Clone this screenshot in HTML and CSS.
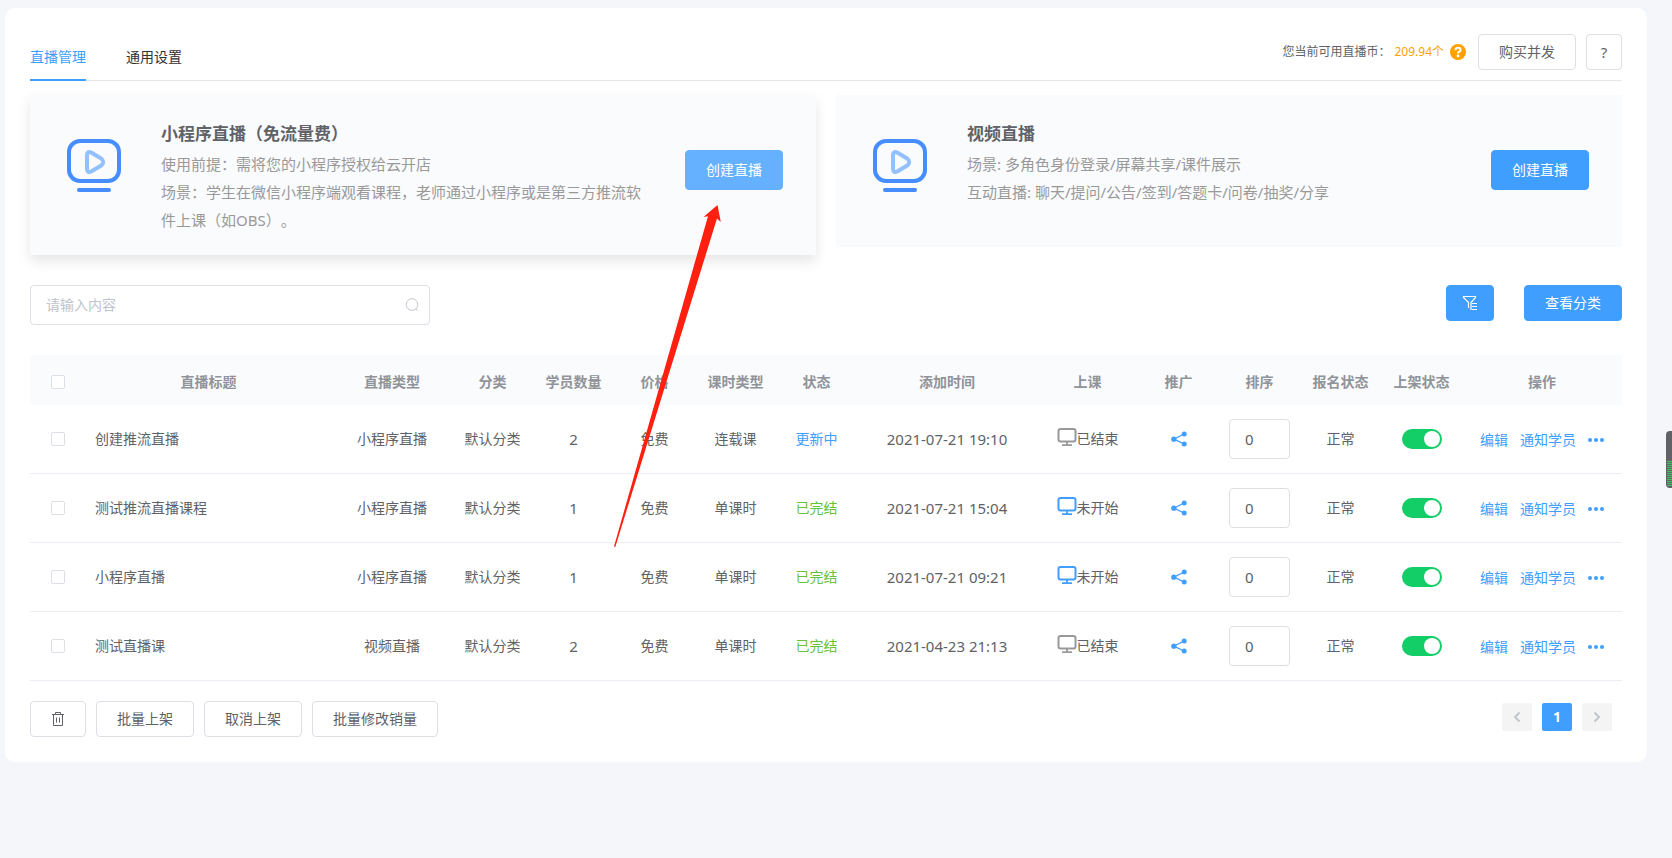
FILE: index.html
```html
<!DOCTYPE html>
<html lang="zh-CN">

<head>
    <meta charset="utf-8">
    <title>直播管理</title>
    <link rel="stylesheet" href="styles.css">
</head>

<body>

    <svg class="sprite" aria-hidden="true">
        <symbol id="icon-live" viewBox="0 0 54 54">
            <rect x="2" y="2" width="50" height="40" rx="11" fill="none" stroke="#468dff" stroke-width="4" />
            <path d="M20 16v13.500q0 5 4.600 2.800l9.600-5.800q4-3.500 0-7l-9.600-5.800q-4.600-2.200-4.600 2.300z" fill="none" stroke="#93c0ff" stroke-width="4" stroke-linejoin="round" />
            <path d="M12 51h30" stroke="#468dff" stroke-width="4" stroke-linecap="round" />
        </symbol>
        <symbol id="icon-monitor" viewBox="0 0 20 20">
            <rect x="1.500" y="2" width="17" height="12.500" rx="2" fill="none" stroke="currentColor" stroke-width="2" />
            <path d="M10 14v4M5 18.200h10" fill="none" stroke="currentColor" stroke-width="1.800" />
        </symbol>
        <symbol id="icon-share" viewBox="0 0 16 16">
            <path d="M13 3L3 8.200l10 4.800" fill="none" stroke="currentColor" stroke-width="1.300" />
            <circle cx="13.200" cy="3" r="2.500" fill="currentColor" />
            <circle cx="2.800" cy="8.200" r="2.600" fill="currentColor" />
            <circle cx="13.200" cy="13" r="2.500" fill="currentColor" />
        </symbol>
        <symbol id="icon-more" viewBox="0 0 16 16">
            <circle cx="2" cy="8" r="2" fill="currentColor" />
            <circle cx="8" cy="8" r="2" fill="currentColor" />
            <circle cx="14" cy="8" r="2" fill="currentColor" />
        </symbol>
    </svg>

    <main class="panel">

        <header class="panel-header">
            <nav class="tabs">
                <a href="#" class="tab active">直播管理</a>
                <a href="#" class="tab">通用设置</a>
            </nav>
            <div class="account">
                <span class="account-label">您当前可用直播币：</span>
                <span class="account-value">209.94个</span>
                <svg class="account-help" width="16" height="16" viewBox="0 0 16 16">
                    <circle cx="8" cy="8" r="8" fill="#ffa200" />
                    <path d="M5.500 6.200q0-2.500 2.500-2.500t2.500 2.200q0 1.200-1.400 1.900-1.100.6-1.100 1.700" fill="none" stroke="#fff" stroke-width="2.100" />
                    <circle cx="8" cy="12" r="1.400" fill="#fff" />
                </svg>
                <button type="button" class="btn">购买并发</button>
                <button type="button" class="btn btn-square">?</button>
            </div>
        </header>

        <section class="cards">
            <div class="card card-hover">
                <svg class="card-icon" width="54" height="54"><use href="#icon-live" /></svg>
                <div class="card-body">
                    <h2>小程序直播（免流量费）</h2>
                    <p>使用前提：需将您的小程序授权给云开店</p>
                    <p>场景：学生在微信小程序端观看课程，老师通过小程序或是第三方推流软件上课（如OBS）。</p>
                </div>
                <button type="button" class="btn btn-primary btn-large btn-light">创建直播</button>
            </div>
            <div class="card">
                <svg class="card-icon" width="54" height="54"><use href="#icon-live" /></svg>
                <div class="card-body">
                    <h2>视频直播</h2>
                    <p>场景: 多角色身份登录/屏幕共享/课件展示</p>
                    <p>互动直播: 聊天/提问/公告/签到/答题卡/问卷/抽奖/分享</p>
                </div>
                <button type="button" class="btn btn-primary btn-large">创建直播</button>
            </div>
        </section>

        <div class="toolbar">
            <div class="search">
                <input type="text" placeholder="请输入内容" aria-label="请输入内容">
                <svg width="14" height="14" viewBox="0 0 14 14" fill="none" stroke="#c0c4cc">
                    <circle cx="7" cy="6.500" r="5.800" />
                    <path d="M10.600 10.500l2 2.200" />
                </svg>
            </div>
            <div class="toolbar-buttons">
                <button type="button" class="btn btn-primary btn-icon" aria-label="筛选">
                    <svg width="16" height="16" viewBox="0 0 16 16" fill="none" stroke="#fff" stroke-width="1.200">
                        <path d="M6.500 13V7.500L1.500 2.500v-1h12v1L9 7.500v7.500M10 8.500h5M10 11.500h5M10 14.500h5" />
                    </svg>
                </button>
                <button type="button" class="btn btn-primary">查看分类</button>
            </div>
        </div>

        <table class="live-table">
            <colgroup>
                <col class="col-check">
                <col>
                <col class="col-type">
                <col class="col-small">
                <col class="col-small">
                <col class="col-small">
                <col class="col-small">
                <col class="col-small">
                <col class="col-time">
                <col class="col-class">
                <col class="col-small">
                <col class="col-small">
                <col class="col-small">
                <col class="col-small">
                <col class="col-actions">
            </colgroup>
            <thead>
                <tr>
                    <th><input type="checkbox" class="checkbox" aria-label="全选"></th>
                    <th>直播标题</th>
                    <th>直播类型</th>
                    <th>分类</th>
                    <th>学员数量</th>
                    <th>价格</th>
                    <th>课时类型</th>
                    <th>状态</th>
                    <th>添加时间</th>
                    <th>上课</th>
                    <th>推广</th>
                    <th>排序</th>
                    <th>报名状态</th>
                    <th>上架状态</th>
                    <th>操作</th>
                </tr>
            </thead>
            <tbody>
                <tr>
                    <td><input type="checkbox" class="checkbox" aria-label="选择"></td>
                    <td class="title">创建推流直播</td>
                    <td>小程序直播</td>
                    <td>默认分类</td>
                    <td class="number">2</td>
                    <td>免费</td>
                    <td>连载课</td>
                    <td class="status-updating">更新中</td>
                    <td class="number">2021-07-21 19:10</td>
                    <td><span class="lesson ended"><svg width="20" height="20"><use href="#icon-monitor" /></svg>已结束</span></td>
                    <td><a href="#" class="share" aria-label="推广"><svg width="16" height="16"><use href="#icon-share" /></svg></a></td>
                    <td><input type="text" class="sort" value="0" aria-label="排序"></td>
                    <td>正常</td>
                    <td><input type="checkbox" class="switch" checked aria-label="上架状态"></td>
                    <td><div class="actions"><a href="#">编辑</a><a href="#">通知学员</a><a href="#" aria-label="更多"><svg width="16" height="16"><use href="#icon-more" /></svg></a></div></td>
                </tr>
                <tr>
                    <td><input type="checkbox" class="checkbox" aria-label="选择"></td>
                    <td class="title">测试推流直播课程</td>
                    <td>小程序直播</td>
                    <td>默认分类</td>
                    <td class="number">1</td>
                    <td>免费</td>
                    <td>单课时</td>
                    <td class="status-done">已完结</td>
                    <td class="number">2021-07-21 15:04</td>
                    <td><span class="lesson"><svg width="20" height="20"><use href="#icon-monitor" /></svg>未开始</span></td>
                    <td><a href="#" class="share" aria-label="推广"><svg width="16" height="16"><use href="#icon-share" /></svg></a></td>
                    <td><input type="text" class="sort" value="0" aria-label="排序"></td>
                    <td>正常</td>
                    <td><input type="checkbox" class="switch" checked aria-label="上架状态"></td>
                    <td><div class="actions"><a href="#">编辑</a><a href="#">通知学员</a><a href="#" aria-label="更多"><svg width="16" height="16"><use href="#icon-more" /></svg></a></div></td>
                </tr>
                <tr>
                    <td><input type="checkbox" class="checkbox" aria-label="选择"></td>
                    <td class="title">小程序直播</td>
                    <td>小程序直播</td>
                    <td>默认分类</td>
                    <td class="number">1</td>
                    <td>免费</td>
                    <td>单课时</td>
                    <td class="status-done">已完结</td>
                    <td class="number">2021-07-21 09:21</td>
                    <td><span class="lesson"><svg width="20" height="20"><use href="#icon-monitor" /></svg>未开始</span></td>
                    <td><a href="#" class="share" aria-label="推广"><svg width="16" height="16"><use href="#icon-share" /></svg></a></td>
                    <td><input type="text" class="sort" value="0" aria-label="排序"></td>
                    <td>正常</td>
                    <td><input type="checkbox" class="switch" checked aria-label="上架状态"></td>
                    <td><div class="actions"><a href="#">编辑</a><a href="#">通知学员</a><a href="#" aria-label="更多"><svg width="16" height="16"><use href="#icon-more" /></svg></a></div></td>
                </tr>
                <tr>
                    <td><input type="checkbox" class="checkbox" aria-label="选择"></td>
                    <td class="title">测试直播课</td>
                    <td>视频直播</td>
                    <td>默认分类</td>
                    <td class="number">2</td>
                    <td>免费</td>
                    <td>单课时</td>
                    <td class="status-done">已完结</td>
                    <td class="number">2021-04-23 21:13</td>
                    <td><span class="lesson ended"><svg width="20" height="20"><use href="#icon-monitor" /></svg>已结束</span></td>
                    <td><a href="#" class="share" aria-label="推广"><svg width="16" height="16"><use href="#icon-share" /></svg></a></td>
                    <td><input type="text" class="sort" value="0" aria-label="排序"></td>
                    <td>正常</td>
                    <td><input type="checkbox" class="switch" checked aria-label="上架状态"></td>
                    <td><div class="actions"><a href="#">编辑</a><a href="#">通知学员</a><a href="#" aria-label="更多"><svg width="16" height="16"><use href="#icon-more" /></svg></a></div></td>
                </tr>
            </tbody>
        </table>

        <footer class="panel-footer">
            <div class="batch">
                <button type="button" class="btn" aria-label="删除">
                    <svg width="14" height="14" viewBox="0 0 14 14" fill="none" stroke="#606266">
                        <path d="M1 2.500h12M4.500 2.500v-2h5v2M2.500 2.500v11h9v-11M5.500 5.500v5M8.500 5.500v5" />
                    </svg>
                </button>
                <button type="button" class="btn">批量上架</button>
                <button type="button" class="btn">取消上架</button>
                <button type="button" class="btn">批量修改销量</button>
            </div>
            <div class="pager">
                <button type="button" class="page" disabled aria-label="上一页">
                    <svg width="12" height="12" viewBox="0 0 12 12"><path d="M8.500 1.500L4 6l4.500 4.500" fill="none" stroke="#c0c4cc" stroke-width="1.800" /></svg>
                </button>
                <button type="button" class="page current">1</button>
                <button type="button" class="page" disabled aria-label="下一页">
                    <svg width="12" height="12" viewBox="0 0 12 12"><path d="M3.500 1.500L8 6l-4.500 4.500" fill="none" stroke="#c0c4cc" stroke-width="1.800" /></svg>
                </button>
            </div>
        </footer>

    </main>

    <!-- arrow pointing at the create button -->
    <svg class="pointer" width="110" height="345" viewBox="0 0 110 345">
        <path d="M105.500 1L108.800 18 105 14.500 3.300 343 2 342.500 96 12.200 91.500 13z" fill="#ff2010" />
    </svg>

    <div class="meter"></div>

</body>

</html>
```
FILE: styles.css
```css
* {
    margin: 0;
    padding: 0;
    box-sizing: border-box;
}

body {
    min-height: 100vh;
    padding: 8px 25px 20px 5px;
    position: relative;
    font-family: "Noto Sans", "Noto Sans CJK SC", sans-serif;
    font-size: 14px;
    line-height: 20px;
    text-spacing-trim: space-all;
    color: #606266;
    background-color: #f4f6fa;
}

a {
    color: #409eff;
    text-decoration: none;
}

button,
input {
    font: inherit;
}

svg {
    display: block;
    flex-shrink: 0;
}

.sprite {
    position: absolute;
    width: 0;
    height: 0;
}

.panel {
    padding: 25px;
    background-color: #fff;
    border-radius: 10px;
}

/* header */

.panel-header {
    display: flex;
    justify-content: space-between;
    margin-bottom: 14px;
    box-shadow: inset 0 -1px #e4e7ed;
}

.tabs {
    display: flex;
    gap: 40px;
}

.tab {
    line-height: 48px;
    color: #303133;
}

.tab.active {
    color: #409eff;
    box-shadow: inset 0 -2px #409eff;
}

.account {
    display: flex;
    align-items: center;
    height: 38px;
    font-size: 12px;
}

.account-value {
    margin: 0 6px 0 4px;
    color: #ffa200;
}

.account-help {
    margin-right: 12px;
}

.account .btn-square {
    width: 36px;
    margin-left: 10px;
    padding: 0;
    font-size: 15px;
}

/* buttons */

.btn {
    display: inline-flex;
    align-items: center;
    justify-content: center;
    height: 36px;
    padding: 0 20px;
    font-size: 14px;
    color: #606266;
    background-color: #fff;
    border: 1px solid #dcdfe6;
    border-radius: 4px;
    white-space: nowrap;
    cursor: pointer;
}

.btn-primary {
    color: #fff;
    background-color: #409eff;
    border-color: #409eff;
}

.btn-light {
    background-color: #66b1ff;
    border-color: #66b1ff;
}

.btn-large {
    height: 40px;
}

.btn-icon {
    padding: 0 15px;
}

/* cards */

.cards {
    display: grid;
    grid-template-columns: 1fr 1fr;
    gap: 20px;
    align-items: start;
    margin-bottom: 30px;
}

.card {
    display: flex;
    align-items: flex-start;
    gap: 40px;
    min-height: 152px;
    padding: 25px 33px 21px 37px;
    background-color: #fafbfd;
}

.card-hover {
    box-shadow: 0 6px 12px rgba(0, 0, 0, .1);
}

.card-icon {
    margin-top: 19px;
}

.card-body {
    flex: 1;
    font-size: 15px;
    line-height: 28px;
    color: #999;
}

.card h2 {
    margin-bottom: 2px;
    font-size: 17px;
    color: #606266;
}

.card .btn {
    margin-top: 30px;
}

/* toolbar */

.toolbar {
    display: flex;
    justify-content: space-between;
    align-items: flex-start;
    margin-bottom: 30px;
}

.search {
    display: flex;
    align-items: center;
    width: 400px;
    height: 40px;
    padding: 0 10px 0 15px;
    border: 1px solid #dcdfe6;
    border-radius: 4px;
}

.search input {
    flex: 1;
    border: 0;
    outline: 0;
    color: #606266;
}

.search input::placeholder {
    color: #c0c4cc;
}

.toolbar-buttons {
    display: flex;
    gap: 30px;
}

/* table */

.live-table {
    width: 100%;
    table-layout: fixed;
    border-collapse: separate;
    border-spacing: 0;
    text-align: center;
}

.col-check {
    width: 55px;
}

.col-type {
    width: 120px;
}

.col-small {
    width: 81px;
}

.col-time {
    width: 180px;
}

.col-class {
    width: 101px;
}

.col-actions {
    width: 160px;
}

.live-table th {
    height: 50px;
    padding-top: 3px;
    color: #909399;
    background-color: #fafbfd;
}

.live-table td {
    height: 69px;
    border-bottom: 1px solid #ebeef5;
}

.live-table .title {
    padding: 0 10px;
    text-align: left;
}

.number {
    font-size: 15px;
}

.status-updating {
    color: #409eff;
}

.status-done {
    color: #67c23a;
}

.checkbox {
    appearance: none;
    display: block;
    width: 14px;
    height: 14px;
    margin: 0 auto;
    background-color: #fff;
    border: 1px solid #dcdfe6;
    border-radius: 2px;
}

.lesson {
    display: flex;
    align-items: center;
    justify-content: center;
}

.lesson svg {
    margin-bottom: 4px;
    color: #409eff;
}

.lesson.ended svg {
    color: #999;
}

.share svg {
    margin: 0 auto;
}

.sort {
    display: block;
    width: 61px;
    height: 40px;
    margin: 0 auto;
    padding: 0 15px;
    font-size: 15px;
    color: #606266;
    background-color: #fff;
    border: 1px solid #dcdfe6;
    border-radius: 4px;
}

.switch {
    appearance: none;
    display: block;
    width: 40px;
    height: 20px;
    margin: 0 auto;
    padding: 2px;
    background-color: #dcdfe6;
    border-radius: 10px;
    cursor: pointer;
}

.switch::before {
    content: "";
    display: block;
    width: 16px;
    height: 16px;
    background-color: #fff;
    border-radius: 50%;
}

.switch:checked {
    background-color: #13ce66;
}

.switch:checked::before {
    margin-left: auto;
}

.actions {
    display: flex;
    align-items: center;
    justify-content: center;
    gap: 12px;
    padding-top: 2px;
}

/* footer */

.panel-footer {
    display: flex;
    align-items: center;
    justify-content: space-between;
    margin-top: 20px;
}

.batch {
    display: flex;
    gap: 10px;
}

.pager {
    display: flex;
    gap: 10px;
    padding: 0 10px 4px 0;
}

.page {
    display: flex;
    align-items: center;
    justify-content: center;
    width: 30px;
    height: 28px;
    font-weight: bold;
    background-color: #f4f4f5;
    border: 0;
    border-radius: 2px;
}

.page.current {
    color: #fff;
    background-color: #409eff;
}

/* overlays */

.pointer {
    position: absolute;
    top: 204px;
    left: 612px;
    pointer-events: none;
}

.meter {
    position: absolute;
    top: 431px;
    right: 0;
    width: 6px;
    height: 57px;
    border: 1px solid #606266;
    border-right: 0;
    border-radius: 4px 0 0 4px;
    background: linear-gradient(#606266 28px, transparent 28px),
        repeating-linear-gradient(#606266 0 1px, #43c463 1px 2px);
}
```
